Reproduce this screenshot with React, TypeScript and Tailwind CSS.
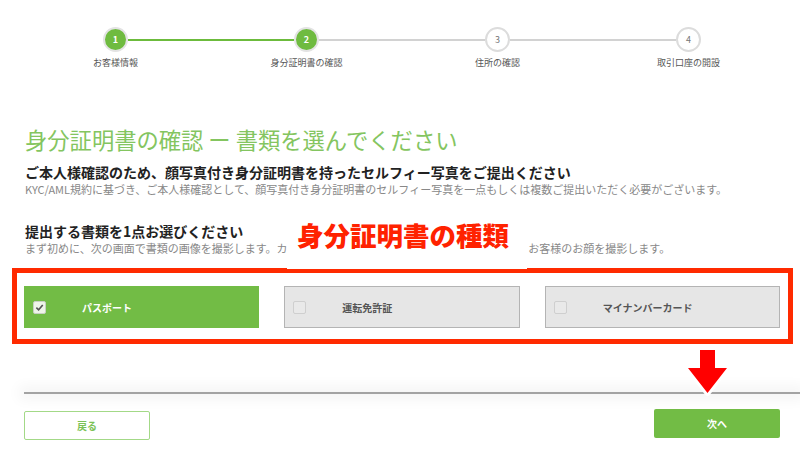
import clsx from "clsx";

const font = { fontFamily: '"Noto Sans CJK JP", "Noto Sans", sans-serif' };

const steps = ["お客様情報", "身分証明書の確認", "住所の確認", "取引口座の開設"];
const currentStep = 2;

const documents = ["パスポート", "運転免許証", "マイナンバーカード"];

// progress bar at the top: circle per step, joined by half-lines on each side
const Stepper = () => (
  <div className="ml-[20px] w-[764px] grid grid-cols-4 pt-[27px]">
    {steps.map((label, i) => {
      const done = i + 1 <= currentStep;
      const leftDone = i + 1 <= currentStep;
      const rightDone = i + 2 <= currentStep;
      return (
        <div key={label} className="flex flex-col items-center">
          <div className="flex items-center w-full">
            <div
              className={clsx(
                "flex-1 h-[2px]",
                i === 0 ? "bg-transparent" : leftDone ? "bg-[#6cbb3c]" : "bg-[#d2d2d2]"
              )}
            />
            <div
              className={clsx(
                "w-[25px] h-[25px] rounded-full flex items-center justify-center text-[9px] leading-none border-2",
                done
                  ? "bg-[#6fbb40] border-[#e3e3e3] text-white font-bold"
                  : "bg-white border-[#dcdcdc] text-[#777]"
              )}
            >
              {i + 1}
            </div>
            <div
              className={clsx(
                "flex-1 h-[2px]",
                i === steps.length - 1 ? "bg-transparent" : rightDone ? "bg-[#6cbb3c]" : "bg-[#d2d2d2]"
              )}
            />
          </div>
          <p className="mt-[5px] text-[9px] leading-[12px] text-[#555]">{label}</p>
        </div>
      );
    })}
  </div>
);

const CheckBox = ({ checked }: { checked: boolean }) => (
  <span
    className={clsx(
      "w-[13px] h-[13px] rounded-[2px] border flex items-center justify-center shrink-0",
      checked ? "bg-[#eef5e8] border-[#c9cfc4]" : "bg-[#e9e9e9] border-[#cfcfcf]"
    )}
  >
    {checked && (
      <svg width="9" height="9" viewBox="0 0 10 10">
        <path d="M1.5 5.2 L4 7.6 L8.6 2.2" fill="none" stroke="#555" strokeWidth="1.8" />
      </svg>
    )}
  </span>
);

const DocumentCard = ({ label, selected }: { label: string; selected: boolean }) => (
  <div
    className={clsx(
      "h-[42px] flex items-center pl-[8px] border",
      selected ? "bg-[#72bc45] border-[#72bc45]" : "bg-[#e6e6e6] border-[#b4b4b4]"
    )}
  >
    <CheckBox checked={selected} />
    <span
      className={clsx(
        "ml-[36px] text-[10px] font-bold",
        selected ? "text-white" : "text-[#555]"
      )}
    >
      {label}
    </span>
  </div>
);

export default function App() {
  return (
    <div className="relative w-[800px] h-[462px] bg-white overflow-hidden" style={font}>
      <Stepper />

      <section className="px-[25px]">
        <h1 className="mt-[59px] text-[22.3px] leading-[22px] text-[#84c560] whitespace-nowrap">
          身分証明書の確認 ー 書類を選んでください
        </h1>
        <h2 className="mt-[13px] text-[14px] leading-[18px] font-bold text-[#222] whitespace-nowrap">
          ご本人様確認のため、顔写真付き身分証明書を持ったセルフィー写真をご提出ください
        </h2>
        <p className="text-[11px] leading-[16px] text-[#888] whitespace-nowrap">
          KYC/AML規約に基づき、ご本人様確認として、顔写真付き身分証明書のセルフィー写真を一点もしくは複数ご提出いただく必要がございます。
        </p>

        <h2 className="mt-[25px] text-[14px] leading-[18px] font-bold text-[#222] whitespace-nowrap">
          提出する書類を1点お選びください
        </h2>
        <p className="text-[11px] leading-[16px] text-[#888] whitespace-nowrap">
          まず初めに、次の画面で書類の画像を撮影します。カメラへのアクセスを許可していただいたあとに、お客様のお顔を撮影します。
        </p>
      </section>

      {/* document choice, boxed in red */}
      <div className="mt-[12px] ml-[12px] w-[781px] border-[5px] border-[#ff2a00] pt-[13px] pb-[11px] pl-[7px] pr-[8px] grid grid-cols-3 gap-[25px]">
        {documents.map((doc, i) => (
          <DocumentCard key={doc} label={doc} selected={i === 0} />
        ))}
      </div>

      {/* callout label over the instructions */}
      <div className="absolute z-10 left-[287px] top-[215px] w-[240px] h-[54px] bg-white pl-[10px] pt-[2px]">
        <span className="text-[26.5px] leading-[36px] font-black text-[#ff2200] whitespace-nowrap">
          身分証明書の種類
        </span>
      </div>

      <div className="mt-[48px] ml-[24px] h-[2px] bg-[#a3a3a3] shadow-[0_0_14px_5px_rgba(0,0,0,0.05)]" />

      <div className="mt-[15px] pl-[24px] pr-[20px] flex justify-between items-start">
        <button className="mt-[2px] w-[126px] h-[29px] border-[1.5px] border-[#a3d987] rounded-[2px] text-[10px] font-bold text-[#7cc257]">
          戻る
        </button>
        <button className="w-[126px] h-[29px] bg-[#72bc45] rounded-[2px] text-[10px] font-bold text-white">
          次へ
        </button>
      </div>

      {/* red pointer arrow above the next button */}
      <svg
        className="absolute left-[684px] top-[344px]"
        width="48"
        height="54"
        viewBox="0 0 48 54"
      >
        <path
          d="M16 6 H31 V24 H43 L23.5 49 L4 24 H16 Z"
          fill="#ff0000"
          stroke="#ffffff"
          strokeWidth="6"
          strokeLinejoin="round"
          paintOrder="stroke"
        />
      </svg>
    </div>
  );
}
